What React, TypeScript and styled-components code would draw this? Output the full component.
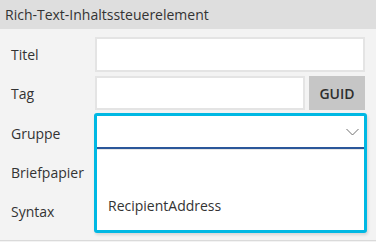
import React from "react";
import styled, { createGlobalStyle } from "styled-components";

const Global = createGlobalStyle`
  html, body { margin: 0; padding: 0; background: #f3f3f3; }
  body { font-family: "Open Sans", "Noto Sans", sans-serif; color: #333; }
  * { box-sizing: border-box; }
`;

const Frame = styled.div`
  width: 376px;
  height: 242px;
  display: flex;
  flex-direction: column;
  overflow: hidden;
`;

const Header = styled.div`
  height: 29px;
  background: #dedede;
  display: flex;
  align-items: center;
  padding-left: 5px;
  font-size: 14px;
  color: #333;
`;

const Panel = styled.div`
  height: 212px;
  background: #f3f3f3;
  border-bottom: 1px solid #dadada;
  padding: 8px 11px 0 11px;
  display: grid;
  grid-template-columns: 84px 1fr;
  grid-auto-rows: auto;
  row-gap: 4px;
  align-content: start;
`;

const Label = styled.div<{ $h: number }>`
  height: ${(p) => p.$h}px;
  display: flex;
  align-items: center;
  font-size: 14px;
  color: #333;
`;

const Field = styled.div<{ $h: number }>`
  height: ${(p) => p.$h}px;
  display: flex;
  gap: 4px;
`;

const TextBox = styled.div`
  flex: 1;
  background: #fff;
  border: 2px solid #e4e4e4;
`;

const GuidButton = styled.div`
  width: 56px;
  background: #c6c6c6;
  display: flex;
  align-items: center;
  justify-content: center;
  font-size: 14px;
  font-weight: 600;
  color: #2e2e2e;
`;

const SelectAnchor = styled.div`
  position: relative;
  height: 38px;
`;

const OpenSelect = styled.div`
  position: absolute;
  top: -1px;
  left: -1px;
  right: -2px;
  height: 120px;
  border: 3px solid #00b8e3;
  border-radius: 3px;
  background: #fff;
  display: flex;
  flex-direction: column;
  box-shadow: 1px 2px 3px rgba(0, 0, 0, 0.12);
  z-index: 2;
`;

const SelectField = styled.div`
  height: 33px;
  flex: none;
  border-bottom: 2px solid #2b579a;
  display: flex;
  align-items: center;
  justify-content: flex-end;
  padding-right: 5px;
  box-shadow: 0 1px 0 #e6e6e6;
`;

const List = styled.div`
  flex: 1;
  display: flex;
  flex-direction: column;
  padding-top: 1px;
`;

const Option = styled.div<{ $h: number }>`
  height: ${(p) => p.$h}px;
  display: flex;
  align-items: center;
  padding-left: 11px;
  font-size: 14px;
  color: #333;
`;

const Chevron = () => (
  <svg width="13" height="8" viewBox="0 0 13 8">
    <path d="M0.5 1 L6.5 7 L12.5 1" fill="none" stroke="#707070" strokeWidth="1" />
  </svg>
);

export default function App() {
  return (
    <Frame>
      <Global />
      <Header>Rich-Text-Inhaltssteuerelement</Header>
      <Panel>
        <Label $h={35}>Titel</Label>
        <Field $h={35}>
          <TextBox />
        </Field>
        <Label $h={34}>Tag</Label>
        <Field $h={34}>
          <TextBox />
          <GuidButton>GUID</GuidButton>
        </Field>
        <Label $h={38}>Gruppe</Label>
        <SelectAnchor>
          <OpenSelect>
            <SelectField>
              <Chevron />
            </SelectField>
            <List>
              <Option $h={38} />
              <Option $h={34}>RecipientAddress</Option>
            </List>
          </OpenSelect>
        </SelectAnchor>
        <Label $h={32}>Briefpapier</Label>
        <div />
        <Label $h={38}>Syntax</Label>
        <div />
      </Panel>
    </Frame>
  );
}
